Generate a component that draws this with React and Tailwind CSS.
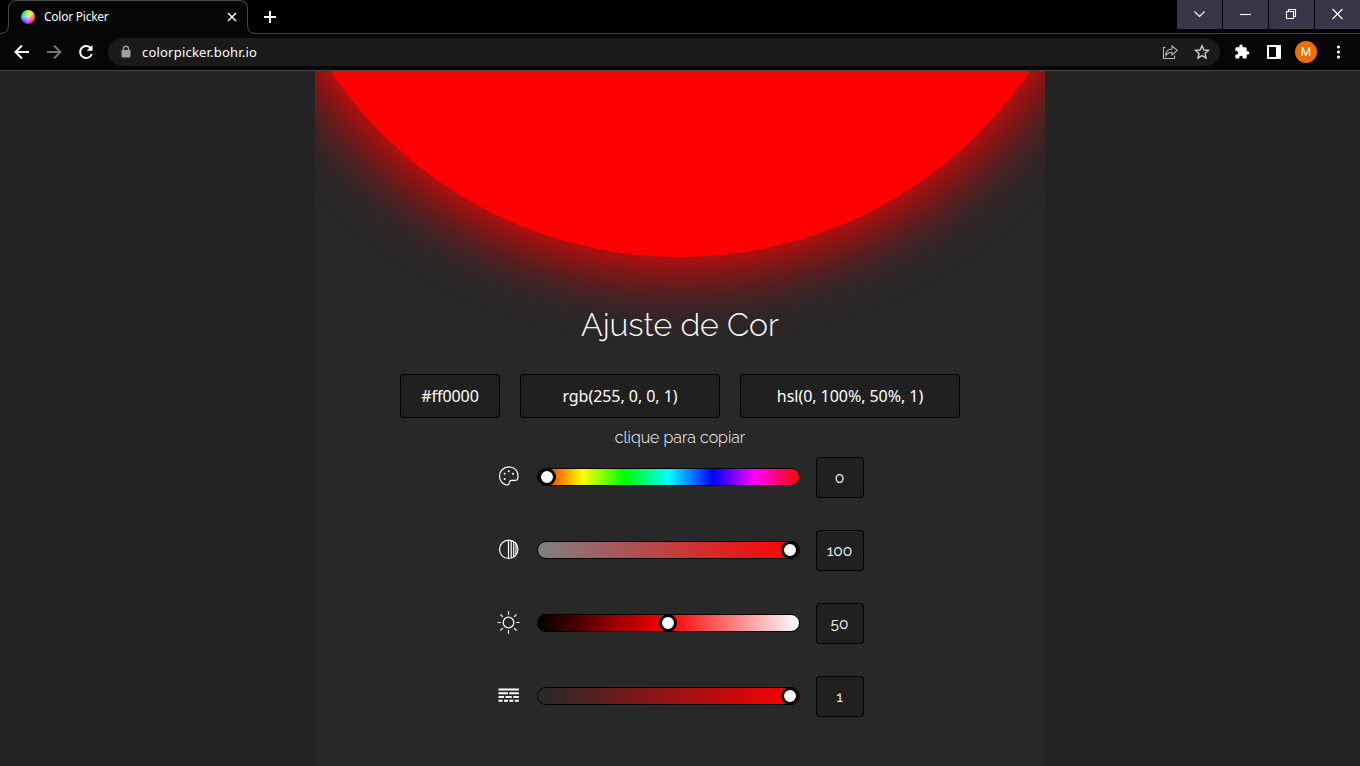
import React from "react";

const rows = [
  { id: "hue", value: "0", pos: "left-0", track: "bg-[linear-gradient(to_right,#f00,#ff0_17%,#0f0_33%,#0ff_50%,#00f_67%,#f0f_83%,#f00)]" },
  { id: "sat", value: "100", pos: "right-0", track: "bg-[linear-gradient(to_right,#808080,#f00)]" },
  { id: "light", value: "50", pos: "left-[121px]", track: "bg-[linear-gradient(to_right,#000,#f00,#fff)]" },
  { id: "alpha", value: "1", pos: "right-0", track: "bg-[linear-gradient(to_right,#282828,#f00)]" },
];

function RowIcon({ id }) {
  const common = { width: 24, height: 24, viewBox: "0 0 24 24", fill: "none", stroke: "#fff", strokeWidth: 1.2 };
  if (id === "hue")
    return (
      <svg {...common}>
        <path d="M10 21C5.800 20.300 2.500 16.800 2.500 12A9.300 9.300 0 0 1 11.800 2.800C17.300 2.800 21 6.600 21 11.500C21 14.500 20.600 16.300 19 16.300H14.500C12.600 16.300 12.700 17.200 12.500 18.500C12.200 20.300 11.500 21.200 10 21Z" />
        <g fill="#fff" stroke="none">
          <circle cx="7.600" cy="9.800" r="1" />
          <circle cx="11.700" cy="7.300" r="1" />
          <circle cx="16" cy="9.800" r="1" />
          <circle cx="7.600" cy="15" r="1" />
        </g>
      </svg>
    );
  if (id === "sat")
    return (
      <svg {...common}>
        <circle cx="11.700" cy="12.300" r="9.200" />
        <path d="M11.500 3V21.500M14.200 3.500V21M16.700 4.500V20M19 6.500V18" />
      </svg>
    );
  if (id === "light")
    return (
      <svg {...common}>
        <circle cx="11.500" cy="12.500" r="5.300" />
        <path d="M11.500 1.300V4.800M11.500 20.200V23.700M.5 12.500H3.800M19.200 12.500H22.500M3.500 4.500L5.900 6.900M17.100 18.100L19.500 20.500M19.500 4.500L17.100 6.900M5.900 18.100L3.500 20.500" />
      </svg>
    );
  return (
    <svg {...common} strokeWidth="1.900">
      <path d="M1.500 6.500H21.800M1.500 10.300H10.900M12.300 10.300H21.800M1.500 14H7M8.500 14H14.800M16.300 14H21.800M1.500 17.800H5.500M7 17.800H10.900M12.300 17.800H16.300M17.800 17.800H21.800" />
    </svg>
  );
}

function Browser() {
  return (
    <header className="h-[71px] shrink-0 border-b border-[#454545] bg-[#060606] font-['Noto_Sans',sans-serif] text-white">
      <div className="flex h-[34px] bg-black">
        <svg width="256" height="34" fill="none" className="-mr-[256px] shrink-0">
          <path d="M0 33.5Q8.5 33.5 8.5 25V9Q8.5.5 17 .5H239Q247.5.5 247.5 9V25Q247.5 33.5 256 33.5V34H0Z" fill="#060606" />
          <path d="M0 33.5Q8.5 33.5 8.5 25V9Q8.5.5 17 .5H239Q247.5.5 247.5 9V25Q247.5 33.5 256 33.5" stroke="#4b4b4b" />
        </svg>
        <div className="z-10 flex h-[33px] w-[256px] shrink-0 items-center pl-[21px]">
          <div className="size-[14px] rounded-full bg-[radial-gradient(circle,#ffffffcc,#ffffff00_75%),conic-gradient(#9f0,#fd0,#f50,#f06,#b0f,#33f,#0bf,#0d6,#9f0)]" />
          <span className="ml-[9px] w-[174px] text-[12px]/[16px] tracking-[-0.25px]">Color Picker</span>
          <svg width="28" height="16" fill="none" stroke="#fff" strokeWidth="1.500"><path d="M10 4L18 12M18 4L10 12" /></svg>
        </div>
        <div className="flex flex-1 border-b border-[#454545]">
          <svg width="28" height="33" fill="none" stroke="#fff" strokeWidth="2"><path d="M8 17H20M14 11V23" /></svg>
        </div>
        <div className="flex h-[34px] gap-px border-b border-[#454545]">
          {[
            "M17.500 11.500L22.500 16.500L27.500 11.500",
            "M17 14.500H28",
            "M17.500 11.500H24.500V18.500H17.500ZM19.500 11.500V9.500H26.500V16.500H24.500",
            "M17.500 9L27.500 19M27.500 9L17.500 19",
          ].map((d) => (
            <div key={d} className="h-[29px] w-[45px] bg-[#373747]">
              <svg width="45" height="29" fill="none" stroke="#fff" strokeWidth="1.100"><path d={d} /></svg>
            </div>
          ))}
        </div>
      </div>
      <div className="flex h-9 items-center">
        <svg width="108" height="36" fill="none" stroke="#fff" strokeWidth="2">
          <path d="M29 18H16M22 11.500L15.500 18L22 24.500" />
          <path d="M47 18H60M54 11.500L60.500 18L54 24.500" stroke="#757575" />
          <path d="M91 14.500A6 6 0 1 0 91.800 20" />
          <path d="M92.500 11V16.800H86.700Z" fill="#fff" stroke="none" />
        </svg>
        <div className="flex h-7 w-[1112px] items-center rounded-full bg-[#1a1a1a]">
          <svg width="34" height="28" fill="none" stroke="#9aa0a6" strokeWidth="1.400">
            <rect x="13.500" y="12" width="9" height="7.500" rx="1" fill="#9aa0a6" stroke="none" />
            <path d="M15.500 12V10.500Q15.500 8.300 18 8.300T20.500 10.500V12" />
          </svg>
          <span className="flex-1 text-[13px]/[20px] tracking-[0.2px]">colorpicker.bohr.io</span>
          <svg width="68" height="28" fill="none" stroke="#b5b5b5" strokeWidth="1.100">
            <path d="M13.500 9.500H11.500V20.500H22.500V17.500M13.800 17.500Q14 11.200 20 11V8L25.300 12.300L20 17V14.300Q16.500 14 13.800 17.500Z" />
            <path d="M50 7.800L51.900 12L56.400 12.400L53 15.400L54 19.900L50 17.500L46 19.900L47 15.400L43.600 12.400L48.100 12Z" stroke="#c7c7c7" strokeWidth="1.500" />
          </svg>
        </div>
        <svg width="140" height="36" fill="#fff">
          <path transform="translate(14 9.800) scale(.67)" d="M20.500 11H19V7c0-1.100-.9-2-2-2h-4V3.500a2.500 2.500 0 0 0-5 0V5H4c-1.100 0-2 .9-2 2v3.800h1.500a2.700 2.700 0 0 1 0 5.400H2V20c0 1.100.9 2 2 2h3.800v-1.500a2.700 2.700 0 0 1 5.400 0V22H17c1.100 0 2-.9 2-2v-4h1.500a2.500 2.500 0 0 0 0-5z" />
          <path fillRule="evenodd" d="M47 11H61V25H47ZM49 13V23H56V13Z" />
          <circle cx="86" cy="18" r="11" fill="#ef6c00" />
          <text x="86" y="22" textAnchor="middle" fontFamily="Roboto" fontSize="12">M</text>
          <circle cx="118.500" cy="13" r="1.600" />
          <circle cx="118.500" cy="18" r="1.600" />
          <circle cx="118.500" cy="23" r="1.600" />
        </svg>
      </div>
    </header>
  );
}

const box = "flex items-center justify-center rounded-[3px] border border-black bg-[#202020]";

export default function App() {
  return (
    <div className="flex h-[766px] w-[1360px] flex-col overflow-hidden bg-[#242424] text-white">
      <Browser />
      <main className="mx-auto flex w-[730px] flex-1 flex-col items-center overflow-hidden bg-[#282828]">
        <div className="-mt-[658px] size-[844px] shrink-0 rounded-full bg-[#f00] shadow-[0_0_66px_12px_#f00]" />
        <h1 className="z-10 mt-[48px] h-10 font-['Raleway','Lato',sans-serif] text-[32px]/[40px] font-light whitespace-nowrap">Ajuste de Cor</h1>
        <div className="mt-[29px] flex gap-5 font-['Noto_Sans',sans-serif] text-[16px] tracking-[-0.05px]">
          <div className={box + " h-11 w-[100px]"}>#ff0000</div>
          <div className={box + " h-11 w-[200px]"}>rgb(255, 0, 0, 1)</div>
          <div className={box + " h-11 w-[220px]"}>hsl(0, 100%, 50%, 1)</div>
        </div>
        <p className="mt-[10px] h-[20px] font-['Raleway','Lato',sans-serif] text-[16px]/[20px] font-light">clique para copiar</p>
        <div className="mt-[9px] flex flex-col gap-8">
          {rows.map((r) => (
            <div key={r.id} className="flex h-[41px] items-start">
              <div className="mt-[7px] size-6"><RowIcon id={r.id} /></div>
              <div className={"relative mt-[11px] ml-[16px] h-[18px] w-[263px] rounded-full border border-black " + r.track}>
                <div className={"absolute -top-px size-[18px] rounded-full border-[3px] border-black bg-white " + r.pos} />
              </div>
              <div className={box + " ml-4 h-[41px] w-[48px] font-['Raleway','Lato',sans-serif] text-[15.5px]"}>{r.value}</div>
            </div>
          ))}
        </div>
      </main>
    </div>
  );
}
